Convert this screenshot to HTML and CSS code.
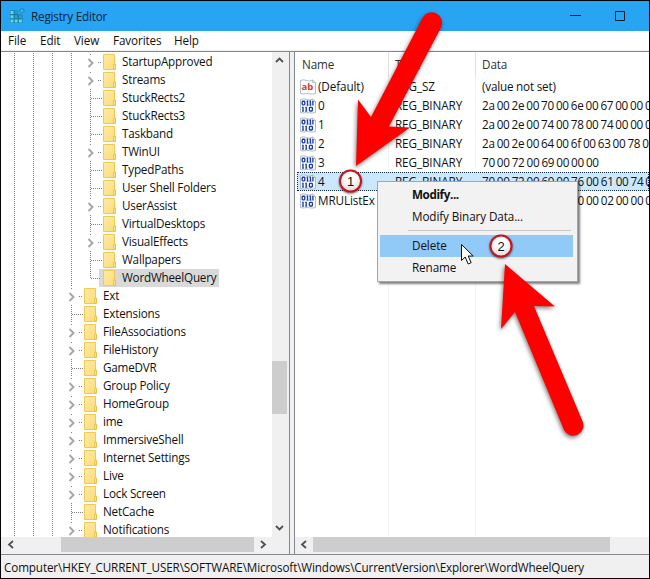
FILE: index.html
```html
<!DOCTYPE html>
<html lang="en">
<head>
<meta charset="utf-8">
<title>Registry Editor</title>
<link rel="stylesheet" href="styles.css">
</head>
<body>
<svg class="defs" width="0" height="0">
  <defs>
    <linearGradient id="fold" x1="0" y1="0" x2="1" y2="1"><stop offset="0" stop-color="#ffeaa4"/><stop offset="1" stop-color="#fbdc78"/></linearGradient>
    <radialGradient id="ball" cx=".5" cy=".35" r=".7"><stop offset="0.3" stop-color="#fff"/><stop offset="1" stop-color="#dcd6d6"/></radialGradient>
    <symbol id="folder" viewBox="0 0 14 16"><path d="M.5.5h11v9.5h1v5.5H.5z" fill="url(#fold)" stroke="#edca58"/><path d="M10.5 15v-4.5h2V15z" fill="#ffe793" stroke="#e6bd43" stroke-width=".8"/></symbol>
    <symbol id="chev" viewBox="0 0 8 10"><path d="M1.500 1l4 4-4 4" fill="none" stroke="#a6a6a6" stroke-width="1.9"/></symbol>
    <symbol id="page" viewBox="0 0 16 16"><path d="M.5 1.5q3-1.5 6 0t6-.5l3 2.5v11q-3 1-6 .3t-6 .2l-3-.5z" fill="#fafcff" stroke="#a9b4bd" stroke-width=".9"/><path d="M12.5 1v2.5h3" fill="none" stroke="#a9b4bd" stroke-width=".8"/></symbol>
    <symbol id="bin" viewBox="0 0 16 16"><use href="#page"/><g fill="none" stroke="#1c3f9e" stroke-width="1.35"><rect x="2.2" y="3.2" width="2.6" height="3.6" rx=".8"/><path d="M7.5 2.6v4.8M10.4 2.6v4.8M12.9 3v4.4M3 8.8v4.8M6.2 8.8v4.8"/><rect x="9.4" y="9.4" width="3" height="3.6" rx=".8"/><path d="M6.5 3.2h1M9.4 3.2h1M2 9.4h1M5.2 9.4h1M6.6 7.1h2M9.5 7.1h2M2 13.2h2.1M5.2 13.2h2.1" stroke-width=".7"/></g></symbol>
  </defs>
</svg>
<div class="window">
  <header class="title">
    <svg class="app" width="16" height="16" viewBox="0 0 16 16"><path d="M1 2.5h8v4h4.5V15H1z" fill="#187d9f"/><path d="M1.5 3h3v3h-3zM1.5 7.2h3v3h-3zM1.5 11.5h3v3h-3zM5.7 11.5h3v3h-3zM9.9 11.5h3v3h-3z" fill="#65d5ef"/><path d="M5.7 3h3v3h-3zM5.7 7.2h3v3h-3zM9.9 7.2h3v3h-3z" fill="#25a0c5"/><path d="M11 1.5l3-.8 1.4 2.6-2.8 1.5-2-1.5z" fill="#40bddd" stroke="#187d9f" stroke-width=".9"/></svg>
    <span class="name">Registry Editor</span>
    <svg class="controls" width="60" height="12" viewBox="0 0 60 12"><path d="M0 5.500h11M45.5 1.500h9v9h-9z" fill="none" stroke="#06192c"/></svg>
  </header>
  <nav class="menu"><span class="m1">File</span><span class="m2">Edit</span><span class="m3">View</span><span class="m4">Favorites</span><span class="m5">Help</span></nav>
  <main class="panes">
    <section class="left">
      <div class="upper">
        <ul class="tree">
          <li class="deep open"><svg class="chev"><use href="#chev"/></svg><svg class="folder"><use href="#folder"/></svg><span>StartupApproved</span></li>
          <li class="deep open"><svg class="chev"><use href="#chev"/></svg><svg class="folder"><use href="#folder"/></svg><span>Streams</span></li>
          <li class="deep"><svg class="folder"><use href="#folder"/></svg><span>StuckRects2</span></li>
          <li class="deep"><svg class="folder"><use href="#folder"/></svg><span>StuckRects3</span></li>
          <li class="deep"><svg class="folder"><use href="#folder"/></svg><span>Taskband</span></li>
          <li class="deep open"><svg class="chev"><use href="#chev"/></svg><svg class="folder"><use href="#folder"/></svg><span>TWinUI</span></li>
          <li class="deep"><svg class="folder"><use href="#folder"/></svg><span>TypedPaths</span></li>
          <li class="deep"><svg class="folder"><use href="#folder"/></svg><span>User Shell Folders</span></li>
          <li class="deep open"><svg class="chev"><use href="#chev"/></svg><svg class="folder"><use href="#folder"/></svg><span>UserAssist</span></li>
          <li class="deep"><svg class="folder"><use href="#folder"/></svg><span>VirtualDesktops</span></li>
          <li class="deep open"><svg class="chev"><use href="#chev"/></svg><svg class="folder"><use href="#folder"/></svg><span>VisualEffects</span></li>
          <li class="deep"><svg class="folder"><use href="#folder"/></svg><span>Wallpapers</span></li>
          <li class="deep last"><svg class="folder"><use href="#folder"/></svg><span class="chosen">WordWheelQuery</span></li>
          <li class="open"><svg class="chev"><use href="#chev"/></svg><svg class="folder"><use href="#folder"/></svg><span>Ext</span></li>
          <li><svg class="folder"><use href="#folder"/></svg><span>Extensions</span></li>
          <li class="open"><svg class="chev"><use href="#chev"/></svg><svg class="folder"><use href="#folder"/></svg><span>FileAssociations</span></li>
          <li class="open"><svg class="chev"><use href="#chev"/></svg><svg class="folder"><use href="#folder"/></svg><span>FileHistory</span></li>
          <li><svg class="folder"><use href="#folder"/></svg><span>GameDVR</span></li>
          <li class="open"><svg class="chev"><use href="#chev"/></svg><svg class="folder"><use href="#folder"/></svg><span>Group Policy</span></li>
          <li class="open"><svg class="chev"><use href="#chev"/></svg><svg class="folder"><use href="#folder"/></svg><span>HomeGroup</span></li>
          <li class="open"><svg class="chev"><use href="#chev"/></svg><svg class="folder"><use href="#folder"/></svg><span>ime</span></li>
          <li class="open"><svg class="chev"><use href="#chev"/></svg><svg class="folder"><use href="#folder"/></svg><span>ImmersiveShell</span></li>
          <li class="open"><svg class="chev"><use href="#chev"/></svg><svg class="folder"><use href="#folder"/></svg><span>Internet Settings</span></li>
          <li class="open"><svg class="chev"><use href="#chev"/></svg><svg class="folder"><use href="#folder"/></svg><span>Live</span></li>
          <li class="open"><svg class="chev"><use href="#chev"/></svg><svg class="folder"><use href="#folder"/></svg><span>Lock Screen</span></li>
          <li><svg class="folder"><use href="#folder"/></svg><span>NetCache</span></li>
          <li class="open"><svg class="chev"><use href="#chev"/></svg><svg class="folder"><use href="#folder"/></svg><span>Notifications</span></li>
        </ul>
        <div class="vbar"><svg width="16" height="17" viewBox="0 0 16 17"><path d="M4 10l3.500-3.500L11 10" fill="none" stroke="#505050" stroke-width="1.8"/></svg><i></i><svg width="16" height="17" viewBox="0 0 16 17"><path d="M4 6l3.500 3.500L11 6" fill="none" stroke="#505050" stroke-width="1.8"/></svg></div>
      </div>
      <div class="hbar"><svg width="17" height="16" viewBox="0 0 17 16"><path d="M12 4L8 7.500l4 3.500" fill="none" stroke="#505050" stroke-width="1.8"/></svg><i class="lthumb"></i><svg width="17" height="16" viewBox="0 0 17 16"><path d="M7 4l4 3.500L7 11" fill="none" stroke="#505050" stroke-width="1.8"/></svg></div>
    </section>
    <section class="right">
      <div class="list">
        <div class="head"><span>Name</span><span>Type</span><span>Data</span></div>
        <div class="row"><svg class="ico" viewBox="0 0 16 16"><use href="#page"/><text class="ab" x="1.500" y="11">ab</text></svg><span>(Default)</span><span>REG_SZ</span><span class="word">(value not set)</span></div>
        <div class="row"><svg class="ico"><use href="#bin"/></svg><span>0</span><span>REG_BINARY</span><span class="hex">2a 00 2e 00 70 00 6e 00 67 00 00 00</span></div>
        <div class="row"><svg class="ico"><use href="#bin"/></svg><span>1</span><span>REG_BINARY</span><span class="hex">2a 00 2e 00 74 00 78 00 74 00 00 00</span></div>
        <div class="row"><svg class="ico"><use href="#bin"/></svg><span>2</span><span>REG_BINARY</span><span class="hex">2a 00 2e 00 64 00 6f 00 63 00 78 00</span></div>
        <div class="row"><svg class="ico"><use href="#bin"/></svg><span>3</span><span>REG_BINARY</span><span class="hex">70 00 72 00 69 00 00 00</span></div>
        <div class="row picked"><svg class="ico"><use href="#bin"/></svg><span>4</span><span>REG_BINARY</span><span class="hex">70 00 72 00 69 00 76 00 61 00 74 00</span></div>
        <div class="row"><svg class="ico"><use href="#bin"/></svg><span>MRUListEx</span><span>REG_BINARY</span><span class="hex">04 00 00 00 03 00 00 00 02 00 00 00</span></div>
      </div>
      <div class="hbar"><svg width="17" height="16" viewBox="0 0 17 16"><path d="M11 4L7 7.500l4 3.500" fill="none" stroke="#505050" stroke-width="1.8"/></svg><i class="rthumb"></i></div>
    </section>
  </main>
  <footer class="status"><span>Computer\HKEY_CURRENT_USER\SOFTWARE\Microsoft\Windows\CurrentVersion\Explorer\WordWheelQuery</span></footer>
</div>
<div class="popup"><span class="item bold">Modify...</span><span class="item">Modify Binary Data...</span><hr><span class="item hot">Delete</span><span class="item">Rename</span></div>
<svg class="marks" width="650" height="579" viewBox="0 0 650 579">
  <path class="cursor" d="M461.500 244.500v16l3.700-3.500 3 7 3-1.300-3-6.700h5z"/>
  <g class="arrow">
    <path d="M356 166L358 99.500 371 117 422.500 18A10.300 10.300 0 0 1 441 27.500L389 126.500 410 127.500z"/>
    <path d="M505 264L555 306.500 534 306 582.500 421A10.200 10.200 0 0 1 564 430L515 312 501 329z"/>
  </g>
  <g class="ball">
    <circle cx="350.500" cy="181" r="10.500"/><text x="350.500" y="185.500">1</text>
    <circle cx="501" cy="246" r="10.500"/><text x="501" y="250.500">2</text>
  </g>
</svg>
</body>
</html>
```
FILE: styles.css
```css
* { box-sizing: border-box; }
body { margin: 0; width: 650px; height: 579px; overflow: hidden; position: relative; background: #fff; color: #111; font: 11.7px/18px "Open Sans", "Noto Sans", sans-serif; letter-spacing: -0.2px; white-space: nowrap; }
.defs { position: absolute; }
svg { display: block; flex: none; }
.window { width: 650px; height: 579px; border: 1px solid #050509; display: flex; flex-direction: column; }
.title { height: 30px; background: #27a5f3; display: flex; align-items: center; padding-left: 8px; color: #08223b; }
.name { margin-left: 6px; width: 200px; padding-bottom: 1px; }
.controls { margin-left: 339px; }
.menu { height: 20px; display: flex; align-items: center; padding: 0 0 1px 7px; letter-spacing: -0.1px; border-bottom: 1px solid #f0f0f0; }
.m1 { width: 32px; } .m2 { width: 34px; } .m3 { width: 39px; } .m4 { width: 61px; }
.panes { height: 504px; display: flex; justify-content: space-between; background: #f0f0f0; border-top: 1px solid #838790; border-bottom: 1px solid #838790; }
.left { width: 289px; border-right: 1px solid #838790; display: flex; flex-direction: column; }
.upper { height: 485px; display: flex; overflow: hidden; background: #fff; }
.tree { list-style: none; margin: 0; padding: 1px 0 0; width: 271px; background: repeating-linear-gradient(#fff 0 1px, transparent 1px 2px), linear-gradient(90deg, transparent 13px, #808080 13px 14px, transparent 14px 32px, #808080 32px 33px, transparent 33px 51px, #808080 51px 52px, transparent 52px); }
.tree li { height: 18px; display: flex; align-items: center; padding-left: 83px; background: repeating-linear-gradient(90deg, #808080 0 1px, transparent 1px 2px) 71px 9px / 12px 1px no-repeat, repeating-linear-gradient(#808080 0 1px, transparent 1px 2px) 70px 0 / 1px 18px no-repeat; }
.tree .open { padding-left: 67px; background: repeating-linear-gradient(90deg, #808080 0 1px, transparent 1px 2px) 78px 9px / 4px 1px no-repeat, linear-gradient(#808080, #808080) 70px 1px / 1px 1px no-repeat; }
.tree .deep { padding-left: 102px; background: repeating-linear-gradient(90deg, #808080 0 1px, transparent 1px 2px) 90px 9px / 12px 1px no-repeat, repeating-linear-gradient(#808080 0 1px, transparent 1px 2px) 89px 0 / 1px 18px no-repeat, repeating-linear-gradient(#808080 0 1px, transparent 1px 2px) 70px 0 / 1px 18px no-repeat; }
.tree .deep.open { padding-left: 86px; background: repeating-linear-gradient(90deg, #808080 0 1px, transparent 1px 2px) 97px 9px / 4px 1px no-repeat, linear-gradient(#808080, #808080) 89px 1px / 1px 1px no-repeat, repeating-linear-gradient(#808080 0 1px, transparent 1px 2px) 70px 0 / 1px 18px no-repeat; }
.tree .deep.last { background: repeating-linear-gradient(90deg, #808080 0 1px, transparent 1px 2px) 90px 9px / 9px 1px no-repeat, repeating-linear-gradient(#808080 0 1px, transparent 1px 2px) 89px 0 / 1px 10px no-repeat, repeating-linear-gradient(#808080 0 1px, transparent 1px 2px) 70px 0 / 1px 18px no-repeat, linear-gradient(#d9d9d9, #d9d9d9) 98px 0 / 120px 18px no-repeat; }
.tree span { margin-bottom: 2px; }
.chev { width: 8px; height: 10px; margin-right: 8px; margin-top: 2px; }
.folder { width: 14px; height: 16px; margin-right: 5px; }
.vbar { width: 17px; background: #f0f0f0; display: flex; flex-direction: column; }
.vbar i { height: 53px; width: 15px; margin: 292px 0 106px; background: #cdcdcd; }
.hbar { height: 16px; display: flex; background: #f0f0f0; }
.hbar i { height: 15px; background: #cdcdcd; }
.lthumb { width: 193px; margin: 0 0 0 43px; }
.rthumb { width: 297px; margin-left: 1px; }
.right { width: 355px; border-left: 1px solid #838790; display: flex; flex-direction: column; }
.list { height: 485px; padding-left: 2px; overflow: hidden; letter-spacing: -0.1px; background: linear-gradient(90deg, transparent 93px, #f4f4f4 93px 94px, transparent 94px 180px, #f4f4f4 180px 181px, transparent 181px), #fff; }
.head { height: 25px; line-height: 24px; display: grid; grid-template-columns: 87px 87px auto; padding-left: 5px; color: #333; background: linear-gradient(90deg, transparent 91px, #e2e2e2 91px 92px, transparent 92px 178px, #e2e2e2 178px 179px, transparent 179px); }
.head span + span { padding-left: 6px; }
.row { height: 19px; display: grid; grid-template-columns: 18px 77px 87px auto; align-items: center; padding-left: 3px; }
.row span { margin-bottom: 2px; }
.row .hex { letter-spacing: -0.3px; word-spacing: -0.65px; }
.row .word { letter-spacing: -0.2px; }
.picked { background: #cce8ff; outline: 1px dotted #15304a; outline-offset: -1px; }
.ico { width: 16px; height: 16px; }
.ab { font: bold 9.500px "Open Sans", sans-serif; fill: #d33c1f; }
.status { height: 23px; padding: 3px 0 0 3px; background: #f0f0f0; letter-spacing: -0.13px; }
.popup { position: absolute; left: 377px; top: 181px; width: 201px; height: 101px; padding: 2px 4px 0 2px; background: #f2f2f2; border: 1px solid #a6a6a6; box-shadow: 2px 2px 2px rgba(0,0,0,.5); }
.item { display: block; height: 22px; line-height: 21px; padding-left: 32px; letter-spacing: -0.1px; }
.popup hr { margin: 2px 2px 4px 28px; border: 0; border-top: 1px solid #c8c8c8; }
.bold { font-weight: 700; letter-spacing: -0.4px; }
.hot { background: #91c9f7; }
.marks { position: absolute; left: 0; top: 0; }
.cursor { fill: #fff; stroke: #111; }
.arrow { fill: #fe0000; filter: drop-shadow(-1px 2px 2px rgba(0,0,0,.5)); }
.ball circle { fill: url(#ball); stroke: #c8141c; stroke-width: 2; filter: drop-shadow(0 1px 1px rgba(0,0,0,.6)); }
.ball text { font: 13px "Liberation Sans", sans-serif; text-anchor: middle; letter-spacing: 0; fill: #111; }
```
